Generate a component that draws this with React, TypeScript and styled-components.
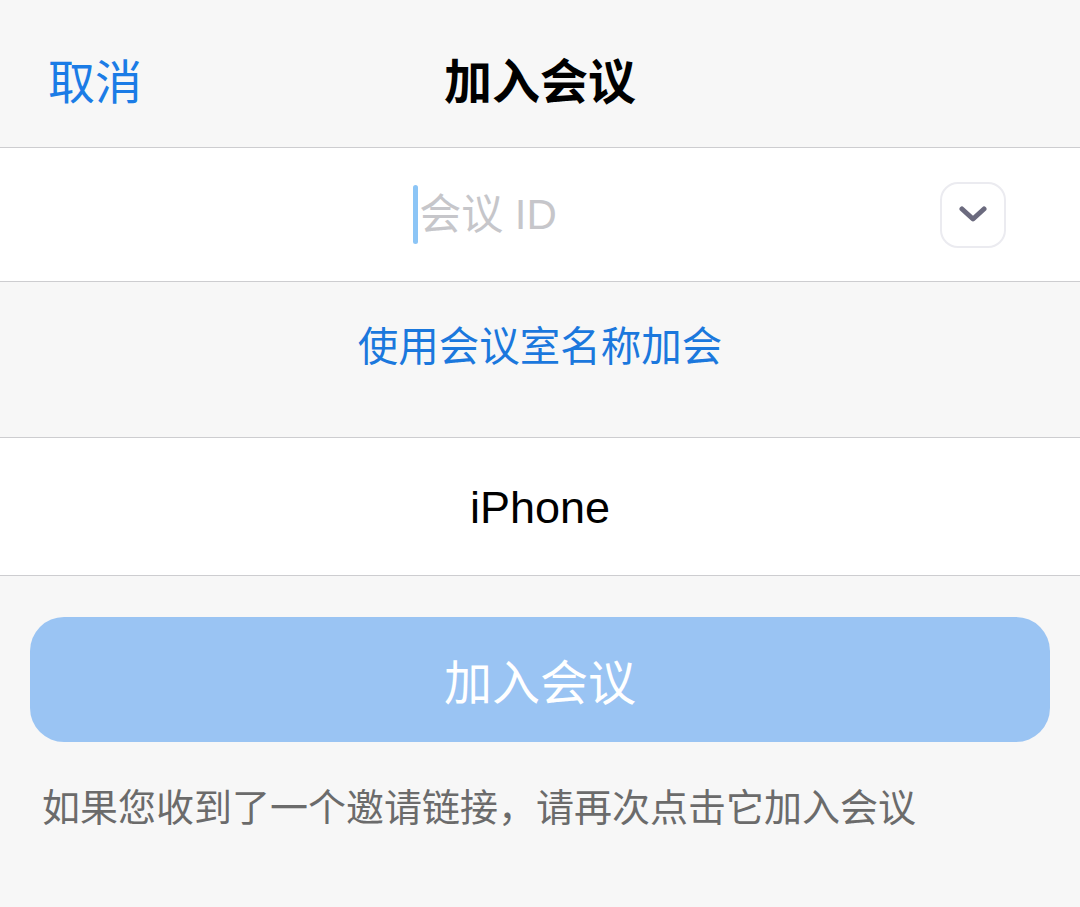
import React from 'react';
import styled, { createGlobalStyle } from 'styled-components';

// --- Global ---
const GlobalStyle = createGlobalStyle`
  html, body {
    margin: 0;
    padding: 0;
    background: #f7f7f7;
  }
  body {
    font-family: "Liberation Sans", "Noto Sans CJK SC", sans-serif;
  }
`;

// --- Styled Components ---
const Page = styled.div`
  width: 1080px;
  min-height: 907px;
  background: #f7f7f7;
  display: flex;
  flex-direction: column;
`;

const NavBar = styled.div`
  position: relative;
  height: 148px;
  display: flex;
  justify-content: center;
  align-items: flex-start;
  padding-top: 54px;
  box-sizing: border-box;
  border-bottom: 1px solid #cdcdd0;
`;

const CancelButton = styled.div`
  position: absolute;
  left: 48px;
  top: 54px;
  font-size: 47px;
  line-height: 58px;
  color: #1b7ce6;
`;

const NavTitle = styled.div`
  font-size: 48px;
  line-height: 58px;
  font-weight: 700;
  color: #000;
`;

const Row = styled.div<{ $height: number }>`
  height: ${p => p.$height}px;
  background: #fff;
  border-bottom: 1px solid #cdcdd0;
  display: flex;
  align-items: center;
`;

const FieldArea = styled.div`
  flex: 1;
  display: flex;
  justify-content: center;
  align-items: center;
  padding-left: 30px;
`;

const Caret = styled.div`
  width: 5px;
  height: 59px;
  border-radius: 3px;
  background: #8cc5f6;
  margin-right: 1px;
`;

const Placeholder = styled.div`
  font-size: 42px;
  line-height: 52px;
  color: #c6c6ca;
`;

const DropButton = styled.div`
  width: 66px;
  height: 66px;
  margin-right: 74px;
  box-sizing: border-box;
  border: 2px solid #ebebf0;
  border-radius: 18px;
  display: flex;
  align-items: center;
  justify-content: center;
`;

const LinkArea = styled.div`
  height: 156px;
  border-bottom: 1px solid #cdcdd0;
  display: flex;
  justify-content: center;
  align-items: flex-start;
  padding-top: 40px;
  box-sizing: border-box;
`;

const LinkText = styled.div`
  font-size: 40.5px;
  line-height: 50px;
  color: #1b78dd;
`;

const DeviceName = styled.div`
  flex: 1;
  text-align: center;
  font-size: 45px;
  line-height: 52px;
  padding-top: 2px;
  color: #000;
`;

const Footer = styled.div`
  padding: 41px 30px 0;
  display: flex;
  flex-direction: column;
`;

const JoinButton = styled.div`
  height: 125px;
  border-radius: 34px;
  background: #9ac4f3;
  display: flex;
  align-items: center;
  justify-content: center;
  font-size: 48px;
  color: #fff;
  padding-bottom: 2px;
  box-sizing: border-box;
`;

const Hint = styled.div`
  margin-top: 42px;
  padding-left: 12px;
  font-size: 38px;
  line-height: 48px;
  color: #6b6b6b;
`;

// --- Component ---
export default function App() {
  return (
    <>
      <GlobalStyle />
      <Page>
        <NavBar>
          <CancelButton>取消</CancelButton>
          <NavTitle>加入会议</NavTitle>
        </NavBar>

        <Row $height={133}>
          <FieldArea>
            <Caret />
            <Placeholder>会议 ID</Placeholder>
          </FieldArea>
          <DropButton>
            <svg width="28" height="18" viewBox="0 0 28 18">
              <path
                d="M3 3 L14 13 L25 3"
                fill="none"
                stroke="#6b6a7e"
                strokeWidth="5"
                strokeLinecap="round"
                strokeLinejoin="round"
              />
            </svg>
          </DropButton>
        </Row>

        <LinkArea>
          <LinkText>使用会议室名称加会</LinkText>
        </LinkArea>

        <Row $height={137}>
          <DeviceName>iPhone</DeviceName>
        </Row>

        <Footer>
          <JoinButton>加入会议</JoinButton>
          <Hint>如果您收到了一个邀请链接，请再次点击它加入会议</Hint>
        </Footer>
      </Page>
    </>
  );
}
